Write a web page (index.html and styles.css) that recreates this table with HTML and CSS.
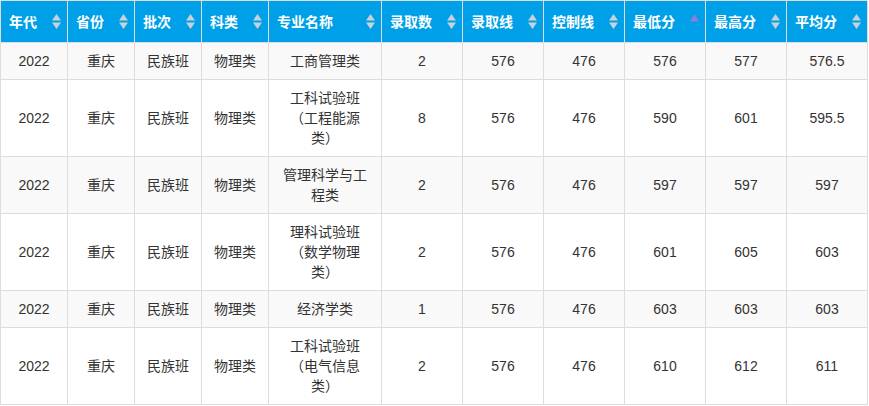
FILE: index.html
```html
<!DOCTYPE html>
<html lang="zh-CN">
<head>
<meta charset="utf-8">
<title>录取分数</title>
<link rel="stylesheet" href="styles.css">
</head>
<body>
<table class="score-table">
  <colgroup>
    <col class="c-s"><col class="c-s"><col class="c-s"><col class="c-s">
    <col class="c-major">
    <col class="c-m"><col class="c-m"><col class="c-m"><col class="c-m"><col class="c-m">
    <col class="c-last">
  </colgroup>
  <thead>
    <tr>
      <th><div class="th-inner"><span>年代</span><svg class="sort" viewBox="0 0 9 16"><path class="up" d="M4.5 0 L9 6.5 L0 6.5 Z"/><path class="down" d="M0 8.5 L9 8.5 L4.5 15 Z"/></svg></div></th>
      <th><div class="th-inner"><span>省份</span><svg class="sort" viewBox="0 0 9 16"><path class="up" d="M4.5 0 L9 6.5 L0 6.5 Z"/><path class="down" d="M0 8.5 L9 8.5 L4.5 15 Z"/></svg></div></th>
      <th><div class="th-inner"><span>批次</span><svg class="sort" viewBox="0 0 9 16"><path class="up" d="M4.5 0 L9 6.5 L0 6.5 Z"/><path class="down" d="M0 8.5 L9 8.5 L4.5 15 Z"/></svg></div></th>
      <th><div class="th-inner"><span>科类</span><svg class="sort" viewBox="0 0 9 16"><path class="up" d="M4.5 0 L9 6.5 L0 6.5 Z"/><path class="down" d="M0 8.5 L9 8.5 L4.5 15 Z"/></svg></div></th>
      <th><div class="th-inner"><span>专业名称</span><svg class="sort" viewBox="0 0 9 16"><path class="up" d="M4.5 0 L9 6.5 L0 6.5 Z"/><path class="down" d="M0 8.5 L9 8.5 L4.5 15 Z"/></svg></div></th>
      <th><div class="th-inner"><span>录取数</span><svg class="sort" viewBox="0 0 9 16"><path class="up" d="M4.5 0 L9 6.5 L0 6.5 Z"/><path class="down" d="M0 8.5 L9 8.5 L4.5 15 Z"/></svg></div></th>
      <th><div class="th-inner"><span>录取线</span><svg class="sort" viewBox="0 0 9 16"><path class="up" d="M4.5 0 L9 6.5 L0 6.5 Z"/><path class="down" d="M0 8.5 L9 8.5 L4.5 15 Z"/></svg></div></th>
      <th><div class="th-inner"><span>控制线</span><svg class="sort" viewBox="0 0 9 16"><path class="up" d="M4.5 0 L9 6.5 L0 6.5 Z"/><path class="down" d="M0 8.5 L9 8.5 L4.5 15 Z"/></svg></div></th>
      <th><div class="th-inner"><span>最低分</span><svg class="sort active" viewBox="0 0 9 16"><path class="up" d="M4.5 0 L9 7.5 L0 7.5 Z"/></svg></div></th>
      <th><div class="th-inner"><span>最高分</span><svg class="sort" viewBox="0 0 9 16"><path class="up" d="M4.5 0 L9 6.5 L0 6.5 Z"/><path class="down" d="M0 8.5 L9 8.5 L4.5 15 Z"/></svg></div></th>
      <th><div class="th-inner"><span>平均分</span><svg class="sort" viewBox="0 0 9 16"><path class="up" d="M4.5 0 L9 6.5 L0 6.5 Z"/><path class="down" d="M0 8.5 L9 8.5 L4.5 15 Z"/></svg></div></th>
    </tr>
  </thead>
  <tbody>
    <tr><td>2022</td><td>重庆</td><td>民族班</td><td>物理类</td><td>工商管理类</td><td>2</td><td>576</td><td>476</td><td>576</td><td>577</td><td>576.5</td></tr>
    <tr><td>2022</td><td>重庆</td><td>民族班</td><td>物理类</td><td>工科试验班（工程能源类）</td><td>8</td><td>576</td><td>476</td><td>590</td><td>601</td><td>595.5</td></tr>
    <tr><td>2022</td><td>重庆</td><td>民族班</td><td>物理类</td><td>管理科学与工程类</td><td>2</td><td>576</td><td>476</td><td>597</td><td>597</td><td>597</td></tr>
    <tr><td>2022</td><td>重庆</td><td>民族班</td><td>物理类</td><td>理科试验班（数学物理类）</td><td>2</td><td>576</td><td>476</td><td>601</td><td>605</td><td>603</td></tr>
    <tr><td>2022</td><td>重庆</td><td>民族班</td><td>物理类</td><td>经济学类</td><td>1</td><td>576</td><td>476</td><td>603</td><td>603</td><td>603</td></tr>
    <tr><td>2022</td><td>重庆</td><td>民族班</td><td>物理类</td><td>工科试验班（电气信息类）</td><td>2</td><td>576</td><td>476</td><td>610</td><td>612</td><td>611</td></tr>
  </tbody>
</table>
</body>
</html>
```

FILE: styles.css
```css
html, body {
  margin: 0;
  padding: 0;
  background: #ffffff;
}

body {
  font-family: "Liberation Sans", "Noto Sans CJK SC", sans-serif;
  font-size: 14px;
  color: #333333;
  text-spacing-trim: space-all;
}

.score-table {
  border-collapse: collapse;
  table-layout: fixed;
  width: 867px;
  border: 1px solid #dddddd;
}

.c-s { width: 67px; }
.c-major { width: 113px; }
.c-m { width: 81px; }
.c-last { width: 81px; }

.score-table th {
  background: #00a0e9;
  color: #ffffff;
  font-weight: bold;
  text-align: left;
  padding: 0 6px 0 8px;
  height: 41px;
  border: 1px solid #dddddd;
  line-height: 20px;
}

.th-inner {
  display: flex;
  align-items: center;
  justify-content: space-between;
}

.sort {
  width: 9px;
  height: 16px;
  flex: none;
}

.sort path {
  fill: #c9d1d9;
}

.sort.active path {
  fill: #8c7ddb;
}

.score-table td {
  text-align: center;
  vertical-align: middle;
  padding: 8px;
  line-height: 20px;
  border: 1px solid #dddddd;
  text-spacing-trim: space-all;
}

.score-table tbody tr:nth-child(odd) td {
  background: #f9f9f9;
}

.score-table tbody tr:nth-child(even) td {
  background: #ffffff;
}
```
